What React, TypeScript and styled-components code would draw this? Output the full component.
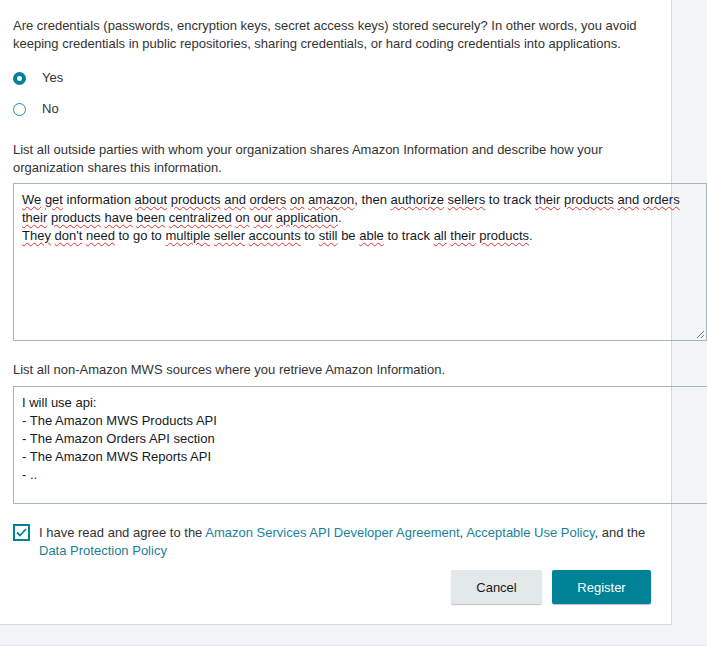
import React from "react";
import styled, { createGlobalStyle } from "styled-components";

const GlobalStyle = createGlobalStyle`
  html, body {
    margin: 0;
    padding: 0;
    background: #ffffff;
  }
  body {
    font-family: "Liberation Sans", Arial, sans-serif;
    font-size: 13px;
    line-height: 18px;
    color: #333333;
  }
`;

const Page = styled.div`
  background: #f3f6f6;
  padding-bottom: 20px;
  border-bottom: 1px solid #e3e6e6;
  overflow: hidden;
`;

const Panel = styled.div`
  width: 638px;
  background: #ffffff;
  border-right: 1px solid #d5dbdb;
  border-bottom: 1px solid #d5dbdb;
  padding: 17px 20px 20px 13px;
  display: flex;
  flex-direction: column;
`;

const Question = styled.p<{ $mt?: number }>`
  margin: ${(p) => p.$mt ?? 0}px 0 0 0;
  color: #333333;
`;

const RadioGroup = styled.div`
  display: flex;
  flex-direction: column;
  gap: 13px;
  margin-top: 16px;
`;

const RadioRow = styled.label`
  display: flex;
  align-items: center;
  height: 18px;
  gap: 16px;
  color: #333333;
  cursor: pointer;
`;

const RadioDot = styled.span<{ $checked?: boolean }>`
  box-sizing: border-box;
  width: 13px;
  height: 13px;
  border-radius: 50%;
  background: #ffffff;
  border: ${(p) => (p.$checked ? "4px solid #008296" : "1px solid #2b8a99")};
  flex: none;
`;

const TextBox = styled.div<{ $w: number; $h: number; $mt: number }>`
  box-sizing: border-box;
  position: relative;
  width: ${(p) => p.$w}px;
  height: ${(p) => p.$h}px;
  margin-top: ${(p) => p.$mt}px;
  flex: none;
  border: 1px solid #aab7b8;
  background: transparent;
  padding: 7px 8px 5px;
  color: #16191f;
  white-space: pre-wrap;
`;

const Miss = styled.span`
  text-decoration: underline wavy #e0302a;
  text-decoration-thickness: 1px;
  text-underline-offset: 2px;
`;

const Grip = styled.svg`
  position: absolute;
  right: 1px;
  bottom: 1px;
`;

const AgreeRow = styled.div`
  display: flex;
  align-items: flex-start;
  gap: 9px;
  margin-top: 20px;
  color: #333333;
`;

const CheckBox = styled.span`
  box-sizing: border-box;
  width: 17px;
  height: 17px;
  margin-top: 0px;
  border: 2px solid #008296;
  background: #ffffff;
  display: flex;
  align-items: center;
  justify-content: center;
  flex: none;
`;

const Link = styled.a`
  color: #1a7f9a;
  text-decoration: none;
`;

const Actions = styled.div`
  display: flex;
  justify-content: flex-end;
  gap: 10px;
  margin-top: 10px;
`;

const Button = styled.button<{ $primary?: boolean }>`
  height: 34px;
  padding: 0 25px;
  min-width: ${(p) => (p.$primary ? 99 : 91)}px;
  border: none;
  border-radius: 2px;
  font-family: "Liberation Sans", Arial, sans-serif;
  font-size: 13px;
  background: ${(p) => (p.$primary ? "#008296" : "#e3e9e9")};
  color: ${(p) => (p.$primary ? "#ffffff" : "#16191f")};
  box-shadow: 0 1px 1px rgba(0, 0, 0, 0.25);
  cursor: pointer;
`;

const W = ({ children }: { children: React.ReactNode }) => <Miss>{children}</Miss>;

export default function App() {
  return (
    <>
      <GlobalStyle />
      <Page>
        <Panel>
          <Question>
            Are credentials (passwords, encryption keys, secret access keys) stored securely? In other words, you avoid
            keeping credentials in public repositories, sharing credentials, or hard coding credentials into applications.
          </Question>
          <RadioGroup>
            <RadioRow>
              <RadioDot $checked />
              Yes
            </RadioRow>
            <RadioRow>
              <RadioDot />
              No
            </RadioRow>
          </RadioGroup>
          <Question $mt={23}>
            List all outside parties with whom your organization shares Amazon Information and describe how your
            organization shares this information.
          </Question>
          <TextBox $w={694} $h={158} $mt={6}>
            <W>We</W> <W>get</W> information <W>about</W> <W>products</W> <W>and</W> <W>orders</W> <W>on</W>{" "}
            <W>amazon</W>, then <W>authorize</W> <W>sellers</W> to track <W>their</W> <W>products</W> <W>and</W>{" "}
            <W>orders</W> <W>their</W> <W>products</W> <W>have</W> <W>been</W> <W>centralized</W> <W>on</W>{" "}
            <W>our</W> <W>application</W>.{"\n"}
            <W>They</W> <W>don't</W> <W>need</W> to go to <W>multiple</W> <W>seller</W> <W>accounts</W> to{" "}
            <W>still</W> be <W>able</W> to track <W>all</W> <W>their</W> <W>products</W>.
            <Grip width="9" height="9" viewBox="0 0 9 9">
              <path d="M8 1 L1 8 M8 5 L5 8" stroke="#7a7a7a" strokeWidth="1" fill="none" />
            </Grip>
          </TextBox>
          <Question $mt={20}>List all non-Amazon MWS sources where you retrieve Amazon Information.</Question>
          <TextBox $w={700} $h={118} $mt={7}>
            {"I will use api:\n- The Amazon MWS Products API\n- The Amazon Orders API section\n- The Amazon MWS Reports API\n- .."}
          </TextBox>
          <AgreeRow>
            <CheckBox>
              <svg width="11" height="9" viewBox="0 0 11 9">
                <path d="M1 4.5 L4 7.5 L10 1" stroke="#008296" strokeWidth="1.8" fill="none" />
              </svg>
            </CheckBox>
            <span>
              I have read and agree to the <Link href="#">Amazon Services API Developer Agreement</Link>,{" "}
              <Link href="#">Acceptable Use Policy</Link>, and the <Link href="#">Data Protection Policy</Link>
            </span>
          </AgreeRow>
          <Actions>
            <Button>Cancel</Button>
            <Button $primary>Register</Button>
          </Actions>
        </Panel>
      </Page>
    </>
  );
}
